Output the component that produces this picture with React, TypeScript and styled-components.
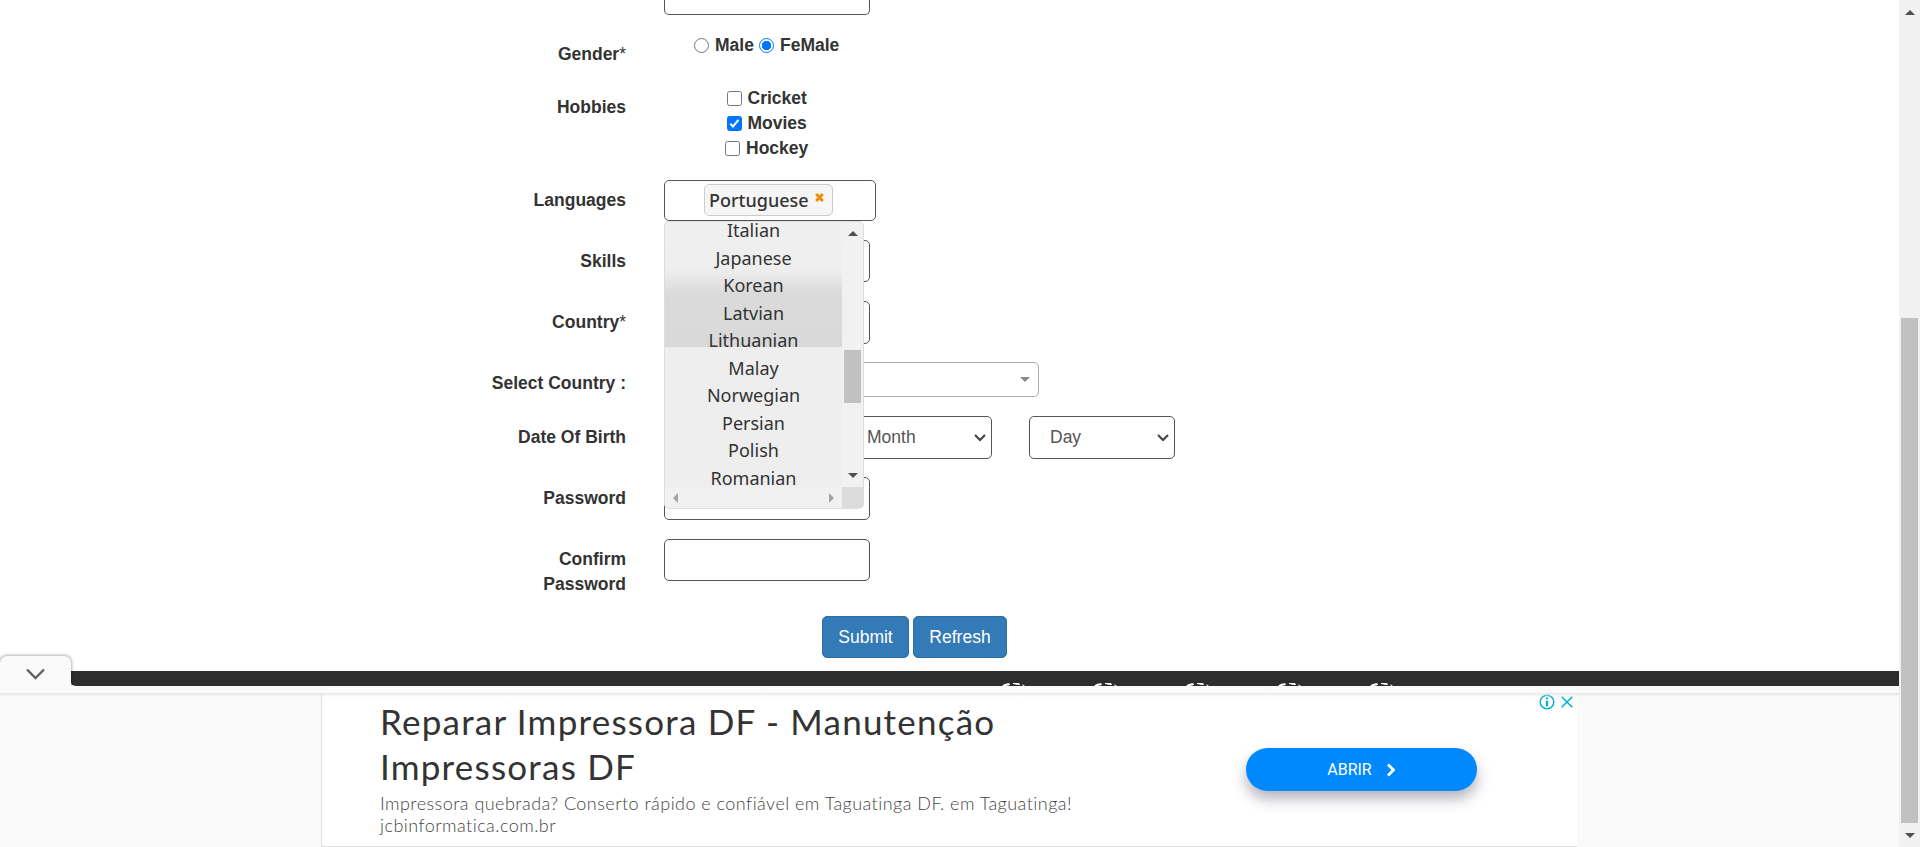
import React from "react";
import styled, { createGlobalStyle } from "styled-components";

const Global = createGlobalStyle`
  * { box-sizing: border-box; }
  html, body { margin: 0; height: 847px; overflow: hidden; background: #fff; }
  body { font: 17.5px/25px "Liberation Sans", Arial, sans-serif; color: #333; }
`;

const Window = styled.div`
  display: flex;
  width: 1920px;
  height: 847px;
  overflow: hidden;
`;
const Page = styled.div`
  display: flex;
  flex-direction: column;
  width: 1899px;
  height: 847px;
`;
const Form = styled.main`
  height: 671px;
  overflow: hidden;
`;
const Row = styled.div<{ $h: number }>`
  display: grid;
  grid-template-columns: 626px 1fr;
  column-gap: 38px;
  height: ${(p) => p.$h}px;
`;
const Label = styled.label<{ $top: number }>`
  padding-top: ${(p) => p.$top}px;
  text-align: right;
  font-weight: 700;
`;
const Star = styled.span`
  font-weight: 400;
`;
const Field = styled.div`
  position: relative;
`;
const Input = styled.div<{ $h?: number; $w?: number }>`
  width: ${(p) => p.$w ?? 206}px;
  height: ${(p) => p.$h ?? 43}px;
  border: 1px solid #555;
  border-radius: 5px;
  background: #fff;
`;
const TopInput = styled(Input)`
  border-top: 0;
  border-radius: 0 0 5px 5px;
`;
const Choices = styled.div<{ $left: number }>`
  display: flex;
  padding-left: ${(p) => p.$left}px;
  height: 25px;
  padding-top: 2px;
  align-items: center;
  font-weight: 700;
`;
const Radio = styled.span<{ $on?: boolean }>`
  width: 15px;
  height: 15px;
  margin-right: 6px;
  border: ${(p) => (p.$on ? "1.5px solid #0075ff" : "1px solid #767676")};
  border-radius: 50%;
  background: ${(p) => (p.$on ? "radial-gradient(circle, #0075ff 4.4px, #fff 5px)" : "#fff")};
`;
const Word = styled.span<{ $w?: number }>`
  width: ${(p) => (p.$w ? p.$w + "px" : "auto")};
  white-space: nowrap;
`;
const Check = styled.span<{ $on?: boolean }>`
  display: flex;
  width: 15px;
  height: 15px;
  margin-right: 6px;
  border: 1px solid ${(p) => (p.$on ? "#0075ff" : "#767676")};
  border-radius: 2.5px;
  background: ${(p) => (p.$on ? "#0075ff" : "#fff")};
`;
const TagBox = styled(Input)`
  display: flex;
  padding: 3px 0 0 39px;
`;
const Tag = styled.div`
  display: flex;
  width: 129px;
  height: 32px;
  padding-left: 4px;
  border: 1px solid #ccc;
  border-radius: 5px;
  background: #f6f6f6;
  font: 500 18px/30px "Noto Sans", sans-serif;
  svg { margin: 8px 0 0 7px; flex: none; }
`;
const Menu = styled.div`
  position: absolute;
  z-index: 2;
  left: 0;
  top: 41px;
  display: grid;
  grid-template: 265px 21px / 177px 21px;
  width: 200px;
  height: 288px;
  border: 1px solid #ddd;
  border-radius: 5px;
  overflow: hidden;
  background: #eee;
`;
const Items = styled.ul`
  margin: 0;
  padding: 0;
  overflow: hidden;
  list-style: none;
  background: linear-gradient(#f0f0f0 0, #eee 47px, #dadada 72px, #d9d9d9 125px, #eee 125px);
`;
const Item = styled.li`
  height: 27.5px;
  text-align: center;
  font: 18px/27.5px "Noto Sans", sans-serif;
  &:first-child { margin-top: -5px; }
`;
const Bar = styled.div`
  display: flex;
  flex-direction: column;
  align-items: center;
  background: #f1f1f1;
`;
const MenuBar = styled(Bar)`
  padding-top: 9px;
`;
const PageBar = styled(Bar)`
  width: 21px;
  padding-top: 10px;
`;
const HBar = styled.div`
  display: flex;
  justify-content: space-between;
  align-items: center;
  padding: 0 8px;
  background: #f1f1f1;
`;
const Corner = styled.div`
  background: #dcdcdc;
`;
const Thumb = styled.div<{ $top: number; $h: number; $bottom: number }>`
  width: 17px;
  height: ${(p) => p.$h}px;
  margin: ${(p) => p.$top}px 0 ${(p) => p.$bottom}px;
  flex: none;
  background: #c1c1c1;
`;
const Combo = styled.div`
  display: flex;
  align-items: center;
  justify-content: flex-end;
  width: 375px;
  height: 35px;
  padding-right: 8px;
  border: 1px solid #aaa;
  border-radius: 5px;
`;
const Dates = styled.div`
  display: grid;
  grid-template-columns: 145px 146px 146px;
  gap: 37px;
`;
const Select = styled.div`
  display: flex;
  align-items: center;
  justify-content: space-between;
  height: 43px;
  padding: 0 5px 0 20px;
  border: 1px solid #555;
  border-radius: 5px;
  color: #555;
`;
const Actions = styled.div`
  display: flex;
  gap: 4px;
  padding: 20px 0 0 822px;
`;
const Button = styled.div<{ $w: number }>`
  width: ${(p) => p.$w}px;
  height: 42px;
  border: 1px solid #2e6da4;
  border-radius: 5px;
  background: #337ab7;
  color: #fff;
  line-height: 40px;
  text-align: center;
`;
const Footer = styled.div`
  position: relative;
  display: flex;
  gap: 68px;
  height: 15px;
  margin-left: 70px;
  padding: 12px 0 0 932px;
  border-radius: 0 0 0 6px;
  background: #2d2d2d;
`;
const Tab = styled.div`
  position: absolute;
  left: -70px;
  top: -15px;
  display: flex;
  justify-content: center;
  width: 71px;
  height: 31px;
  padding-top: 12px;
  border-radius: 7px 7px 0 0;
  background: #fafafa;
  box-shadow: 0 0 3px 1px rgba(0, 0, 0, 0.3);
`;
const Ad = styled.section`
  position: relative;
  height: 161px;
  padding: 7px 0 0 321px;
  background: #fafafa;
`;
const Divider = styled.div`
  height: 4px;
  margin: 0 0 -4px -321px;
  position: relative;
  background: linear-gradient(#e6e6e6, rgba(245, 245, 245, 0));
`;
const Card = styled.div`
  display: flex;
  width: 1256px;
  height: 154px;
  border: solid #e0e0e0;
  border-width: 0 0 1px 1px;
  background: #fff;
`;
const Copy = styled.div`
  width: 866px;
  padding: 6px 0 0 58px;
  white-space: nowrap;
`;
const Headline = styled.div`
  font: 400 35px/45px Lato, sans-serif;
  letter-spacing: 1.22px;
`;
const Text = styled.div`
  font: 300 18px/22px Lato, sans-serif;
  letter-spacing: 0.46px;
  color: #444;
`;
const Description = styled.div`
  padding-top: 3px;
`;
const Open = styled.div`
  display: flex;
  align-items: center;
  justify-content: center;
  gap: 14px;
  width: 231px;
  height: 43px;
  margin: 55px 62px 0 58px;
  flex: none;
  border-radius: 22px;
  background: #0088ff;
  box-shadow: 0 8px 14px rgba(40, 40, 70, 0.35);
  color: #fff;
  font: 400 16px/20px Roboto, sans-serif;
`;
const Choice = styled.div`
  display: flex;
  flex: none;
  gap: 6px;
  margin-top: 1px;
`;

const arrows = {
  up: "M0 5L5 0L10 5Z",
  down: "M0 0L5 5L10 0Z",
  left: "M5 0L0 5L5 10Z",
  right: "M0 0L5 5L0 10Z",
};
const ArrowSvg = styled.svg`
  flex: none;
`;
const Arrow = ({ d = "up", c = "#505050" }: { d?: keyof typeof arrows; c?: string }) => {
  const side = d === "left" || d === "right";
  return (
    <ArrowSvg width={side ? 5 : 10} height={side ? 10 : 5}>
      <path d={arrows[d]} fill={c} />
    </ArrowSvg>
  );
};
const Chevron = () => (
  <svg width="12" height="8" viewBox="0 0 12 8">
    <path d="M1 1L6 6L11 1" fill="none" stroke="#444" strokeWidth="2.1" />
  </svg>
);
const SocialTop = () => (
  <svg width="24" height="3">
    <path d="M0 3Q2 .5 7 0L8 2L4 3ZM11 0H17L18 2H16L11 1ZM20 1L23 3H21Z" fill="#fff" />
  </svg>
);

const languages = ["Italian", "Japanese", "Korean", "Latvian", "Lithuanian", "Malay", "Norwegian", "Persian", "Polish", "Romanian"];
const hobbies = [
  { name: "Cricket", left: 62.5 },
  { name: "Movies", left: 62.5, on: true },
  { name: "Hockey", left: 61 },
];

export default function App() {
  return (
    <Window>
      <Global />
      <Page>
        <Form>
          <Row $h={32}>
            <span />
            <TopInput $h={15} />
          </Row>
          <Row $h={53}>
            <Label $top={10}>
              Gender<Star>*</Star>
            </Label>
            <Choices $left={30}>
              <Radio />
              <Word $w={44}>Male</Word>
              <Radio $on />
              <Word>FeMale</Word>
            </Choices>
          </Row>
          <Row $h={95}>
            <Label $top={10}>Hobbies</Label>
            <Field>
              {hobbies.map((h) => (
                <Choices key={h.name} $left={h.left}>
                  <Check $on={h.on}>
                    {h.on && (
                      <svg width="13" height="13" viewBox="0 0 13 13">
                        <path d="M2.3 6.8L5 9.5L10.5 2.8" fill="none" stroke="#fff" strokeWidth="2" />
                      </svg>
                    )}
                  </Check>
                  <Word>{h.name}</Word>
                </Choices>
              ))}
            </Field>
          </Row>
          <Row $h={60}>
            <Label $top={8}>Languages</Label>
            <Field>
              <TagBox $w={212} $h={41}>
                <Tag>
                  <Word $w={99}>Portuguese</Word>
                  <svg width="9" height="9" viewBox="0 0 9 9">
                    <path d="M1.2 1L7.8 8M7.8 1L1.2 8" stroke="#ef8c08" strokeWidth="3" />
                  </svg>
                </Tag>
              </TagBox>
              <Menu>
                <Items>
                  {languages.map((l) => (
                    <Item key={l}>{l}</Item>
                  ))}
                </Items>
                <MenuBar>
                  <Arrow />
                  <Thumb $top={114} $h={53} $bottom={70} />
                  <Arrow d="down" />
                </MenuBar>
                <HBar>
                  <Arrow d="left" c="#a3a3a3" />
                  <Arrow d="right" c="#a3a3a3" />
                </HBar>
                <Corner />
              </Menu>
            </Field>
          </Row>
          <Row $h={61}>
            <Label $top={9}>Skills</Label>
            <Input $h={42} />
          </Row>
          <Row $h={61}>
            <Label $top={9}>
              Country<Star>*</Star>
            </Label>
            <Input />
          </Row>
          <Row $h={54}>
            <Label $top={9}>Select Country :</Label>
            <Combo>
              <Arrow d="down" c="#888" />
            </Combo>
          </Row>
          <Row $h={61}>
            <Label $top={9}>Date Of Birth</Label>
            <Dates>
              <Select>
                Year
                <Chevron />
              </Select>
              <Select>
                Month
                <Chevron />
              </Select>
              <Select>
                Day
                <Chevron />
              </Select>
            </Dates>
          </Row>
          <Row $h={62}>
            <Label $top={9}>Password</Label>
            <Input />
          </Row>
          <Row $h={57}>
            <Label $top={8}>
              Confirm
              <br />
              Password
            </Label>
            <Input $h={42} />
          </Row>
          <Actions>
            <Button $w={87}>Submit</Button>
            <Button $w={94}>Refresh</Button>
          </Actions>
        </Form>
        <Footer>
          <Tab>
            <svg width="19" height="12" viewBox="0 0 19 12">
              <path d="M1 1.5L9.5 10L18 1.5" fill="none" stroke="#616161" strokeWidth="2.4" />
            </svg>
          </Tab>
          {[0, 1, 2, 3, 4].map((i) => (
            <SocialTop key={i} />
          ))}
        </Footer>
        <Ad>
          <Divider />
          <Card>
            <Copy>
              <Headline>Reparar Impressora DF - Manutenção</Headline>
              <Headline>Impressoras DF</Headline>
              <Description>
                <Text>Impressora quebrada? Conserto rápido e confiável em Taguatinga DF. em Taguatinga!</Text>
                <Text>jcbinformatica.com.br</Text>
              </Description>
            </Copy>
            <Open>
              ABRIR
              <svg width="10" height="14" viewBox="0 0 10 14">
                <path d="M2 1.5L7.5 7L2 12.5" fill="none" stroke="#fff" strokeWidth="2.8" />
              </svg>
            </Open>
            <Choice>
              <svg width="16" height="16" viewBox="0 0 16 16" fill="none" stroke="#00aecd" strokeWidth="1.4">
                <circle cx="8" cy="8" r="6.8" />
                <path d="M8 3.5V5.3M8 6.7V12.2" strokeWidth="2.2" />
              </svg>
              <svg width="12" height="16" viewBox="0 0 12 16" stroke="#00aecd" strokeWidth="1.5">
                <path d="M.7 2.7L11.3 13.3M11.3 2.7L.7 13.3" />
              </svg>
            </Choice>
          </Card>
        </Ad>
      </Page>
      <PageBar>
        <Arrow />
        <Thumb $top={303} $h={505} $bottom={10} />
        <Arrow d="down" />
      </PageBar>
    </Window>
  );
}
